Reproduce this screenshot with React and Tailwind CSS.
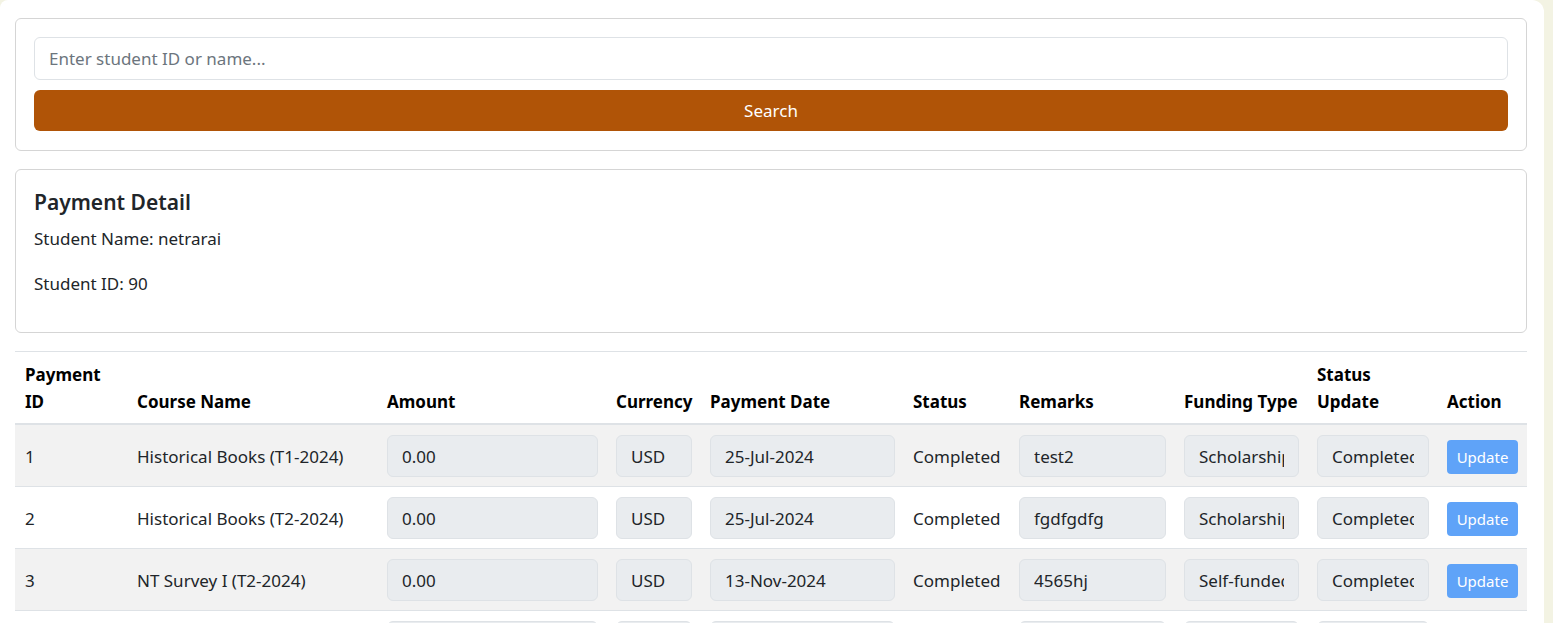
import React from "react";

const rows = [
  { id: 1, course: "Historical Books (T1-2024)", amount: "0.00", currency: "USD", date: "25-Jul-2024", status: "Completed", remarks: "test2", funding: "Scholarship", update: "Completed" },
  { id: 2, course: "Historical Books (T2-2024)", amount: "0.00", currency: "USD", date: "25-Jul-2024", status: "Completed", remarks: "fgdfgdfg", funding: "Scholarship", update: "Completed" },
  { id: 3, course: "NT Survey I (T2-2024)", amount: "0.00", currency: "USD", date: "13-Nov-2024", status: "Completed", remarks: "4565hj", funding: "Self-funded", update: "Completed" },
  { id: 4, course: "NT Survey II (T3-2024)", amount: "0.00", currency: "USD", date: "13-Nov-2024", status: "Completed", remarks: "", funding: "Self-funded", update: "Completed" },
];

const Field = ({ value }) => (
  <input
    readOnly
    value={value}
    className="block w-full h-[42px] px-[14px] rounded-[6px] border border-[#dee2e6] bg-[#e9ecef] text-[17px] text-[#212529] outline-none"
  />
);

export default function App() {
  return (
    <div className="min-h-screen bg-[#f3f3e3]" style={{ fontFamily: '"Noto Sans", sans-serif' }}>
      <div className="w-[1544px] bg-white rounded-tl-[8px] rounded-tr-[12px] pl-[15px] pr-[17px] pt-[18px] pb-8 text-[#212529] text-[17px] leading-[27px]">
        {/* Search */}
        <div className="border border-[#d5d5d5] rounded-[6px] px-[18px] pt-[18px] pb-[19px]">
          <input
            placeholder="Enter student ID or name..."
            className="block w-full h-[43px] px-[14px] rounded-[6px] border border-[#dee2e6] text-[17px] placeholder:text-[#6c757d] outline-none"
          />
          <button className="mt-[10px] w-full h-[41px] rounded-[6px] bg-[#b05407] text-white text-[17px]">Search</button>
        </div>

        {/* Payment detail */}
        <div className="mt-[18px] border border-[#d5d5d5] rounded-[6px] px-[18px] pt-[19px] pb-[17px]">
          <h2 className="text-[21px] leading-[27px] font-semibold mb-[9px]">Payment Detail</h2>
          <p className="mb-[18px]">Student Name: netrarai</p>
          <p className="mb-[18px]">Student ID: 90</p>
        </div>

        {/* Payments table */}
        <table className="mt-[18px] w-full table-fixed border-collapse border-t border-[#dee2e6]">
          <colgroup>
            <col className="w-[112px]" />
            <col className="w-[250px]" />
            <col className="w-[229px]" />
            <col className="w-[94px]" />
            <col className="w-[203px]" />
            <col className="w-[106px]" />
            <col className="w-[165px]" />
            <col className="w-[133px]" />
            <col className="w-[130px]" />
            <col className="w-[90px]" />
          </colgroup>
          <thead>
            <tr className="border-b-2 border-[#dee2e6] text-black text-left align-bottom">
              <th className="font-bold pl-[10px] pr-[8px] pt-[9px] pb-[8px]">Payment ID</th>
              <th className="font-bold pl-[10px] pr-[8px] pt-[9px] pb-[8px]">Course Name</th>
              <th className="font-bold pl-[10px] pr-[8px] pt-[9px] pb-[8px]">Amount</th>
              <th className="font-bold pl-[10px] pr-[8px] pt-[9px] pb-[8px] whitespace-nowrap">Currency</th>
              <th className="font-bold pl-[10px] pr-[8px] pt-[9px] pb-[8px]">Payment Date</th>
              <th className="font-bold pl-[10px] pr-[8px] pt-[9px] pb-[8px]">Status</th>
              <th className="font-bold pl-[10px] pr-[8px] pt-[9px] pb-[8px]">Remarks</th>
              <th className="font-bold pl-[10px] pr-[8px] pt-[9px] pb-[8px] whitespace-nowrap">Funding Type</th>
              <th className="font-bold pl-[10px] pr-[8px] pt-[9px] pb-[8px]">Status Update</th>
              <th className="font-bold pl-[10px] pr-[8px] pt-[9px] pb-[8px]">Action</th>
            </tr>
          </thead>
          <tbody>
            {rows.map((r, i) => (
              <tr key={r.id} className={`border-b border-[#dee2e6] align-middle ${i % 2 === 0 ? "bg-[#f2f2f2]" : "bg-white"}`}>
                <td className="pl-[10px] pr-[8px] pt-[10px] pb-[9px]">{r.id}</td>
                <td className="pl-[10px] pr-[8px] pt-[10px] pb-[9px] whitespace-nowrap">{r.course}</td>
                <td className="pl-[10px] pr-[8px] pt-[10px] pb-[9px]"><Field value={r.amount} /></td>
                <td className="pl-[10px] pr-[8px] pt-[10px] pb-[9px]"><Field value={r.currency} /></td>
                <td className="pl-[10px] pr-[8px] pt-[10px] pb-[9px]"><Field value={r.date} /></td>
                <td className="pl-[10px] pr-[8px] pt-[10px] pb-[9px]">{r.status}</td>
                <td className="pl-[10px] pr-[8px] pt-[10px] pb-[9px]"><Field value={r.remarks} /></td>
                <td className="pl-[10px] pr-[8px] pt-[10px] pb-[9px]"><Field value={r.funding} /></td>
                <td className="pl-[10px] pr-[8px] pt-[10px] pb-[9px]"><Field value={r.update} /></td>
                <td className="pl-[10px] pr-[8px] pt-[10px] pb-[9px]">
                  <button className="w-[71px] h-[34px] mt-[2px] rounded-[4px] bg-[#5fa3f8] text-white text-[15px]">Update</button>
                </td>
              </tr>
            ))}
          </tbody>
        </table>
      </div>
    </div>
  );
}
